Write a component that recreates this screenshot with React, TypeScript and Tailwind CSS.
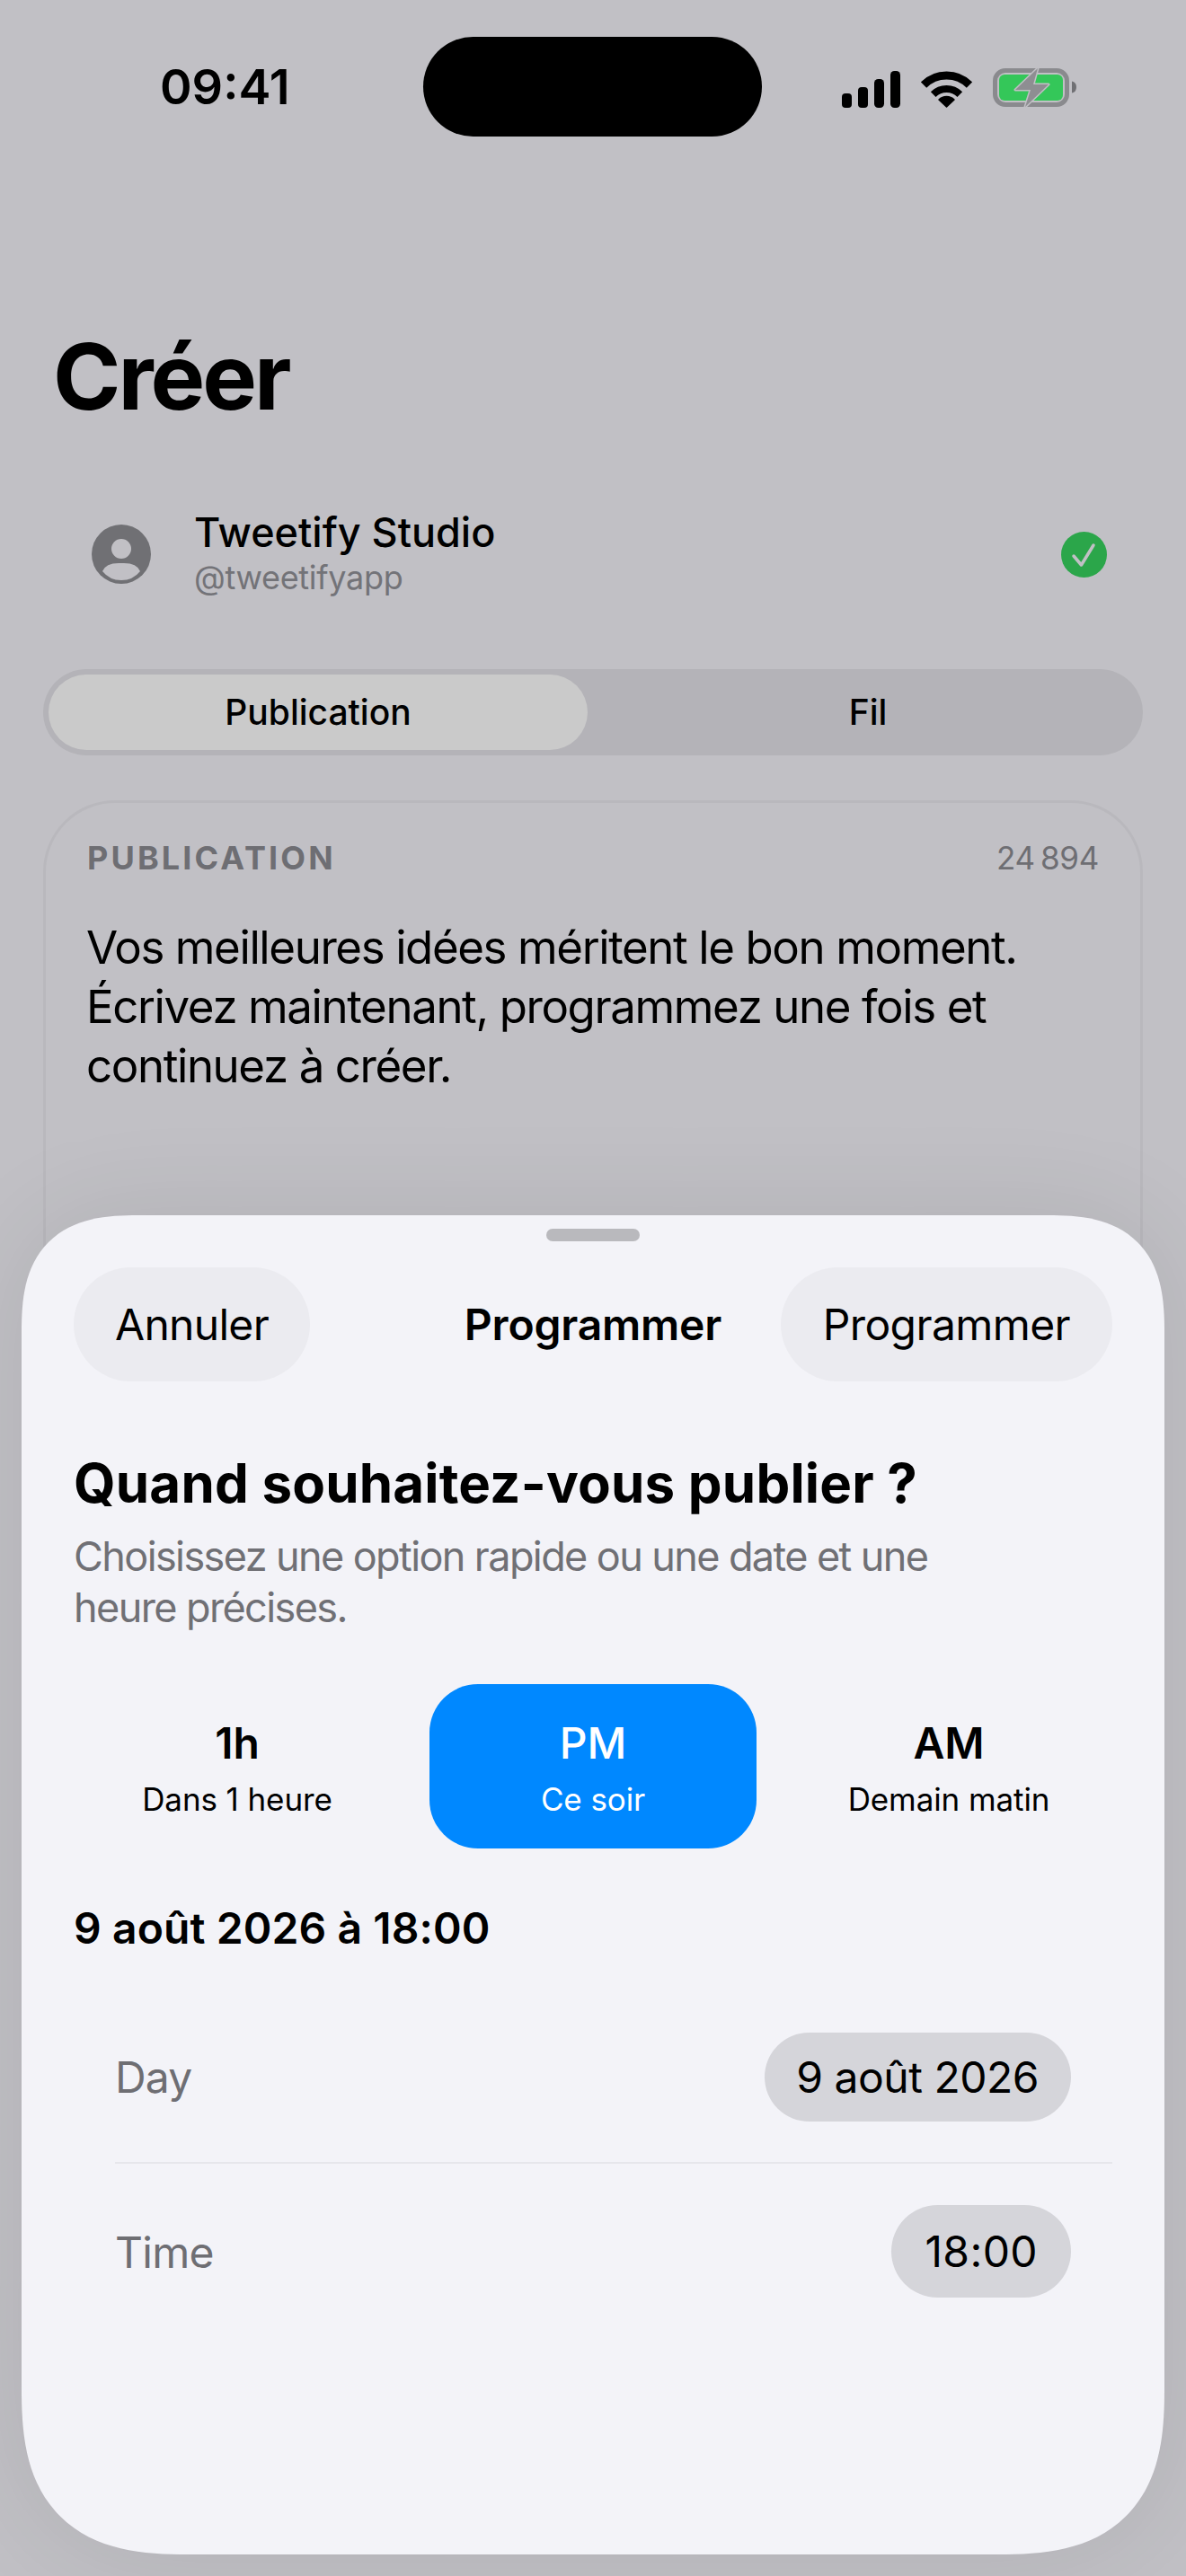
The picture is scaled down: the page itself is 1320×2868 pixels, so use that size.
export default function App() {
  return (
    <div className="relative h-[2868px] w-[1320px] overflow-hidden bg-[#c1c0c5] font-['Inter','Noto_Sans',sans-serif] text-black">
      <header className="flex h-[152px] items-start pt-[41px]">
        <div className="w-[471px] pl-[178px] pt-[26px] text-[54px] leading-[60px] font-semibold">09:41</div>
        <div className="h-[111px] w-[377px] rounded-full bg-black" />
        <div className="flex items-end pl-[89px] pt-[34px]">
          <svg width="65" height="41" viewBox="0 0 65 41" fill="#000">
            <rect x="0" y="25" width="11" height="16" rx="4" />
            <rect x="18" y="18" width="11" height="23" rx="4" />
            <rect x="36" y="9" width="11" height="32" rx="4.5" />
            <rect x="54" y="0" width="11" height="41" rx="4.5" />
          </svg>
          <svg className="ml-[23px]" width="57" height="42" viewBox="0 0 57 42">
            <path d="M3 16.5A36 36 0 0 1 54 16.5" fill="none" stroke="#000" strokeWidth="9" />
            <path d="M13.7 27.2A21 21 0 0 1 43.3 27.2" fill="none" stroke="#000" strokeWidth="8" />
            <path d="M28.5 41L20 33A12 12 0 0 1 37 33Z" fill="#000" stroke="#000" strokeWidth="1.5" strokeLinejoin="round" />
          </svg>
          <svg className="ml-[23px]" width="93" height="45" viewBox="0 -1 93 45">
            <rect x="2.5" y="2.5" width="80" height="38" rx="11.5" fill="none" stroke="#8a8a8e" strokeWidth="5" />
            <rect x="7" y="7" width="71" height="29" rx="6" fill="#34c759" />
            <path d="M88 14.5Q93 15.5 93 21T88 27.5Z" fill="#707074" />
            <path d="M50 0L25 24H42L36 43L62 18H45Z" fill="#8e8e92" stroke="#c1c0c5" strokeWidth="3" strokeLinejoin="round" paintOrder="stroke" />
          </svg>
        </div>
      </header>

      <main className="px-[48px]">
        <h1 className="ml-[11px] mt-[207px] text-[102px] leading-[120px] font-bold tracking-[-3px]">Créer</h1>

        <section className="mt-[74px] flex h-[128px] items-center pl-[54px] pr-[40px]">
          <svg width="66" height="66" viewBox="0 0 66 66">
            <circle cx="33" cy="33" r="33" fill="#707074" />
            <circle cx="33" cy="27" r="11" fill="#c1c0c5" />
            <path d="M12 52Q16 42 33 43Q50 42 54 52Q46 62 33 62Q20 62 12 52Z" fill="#c1c0c5" />
          </svg>
          <div className="ml-[48px] flex-1 pb-[4px]">
            <div className="mb-[2px] text-[45px] leading-[54px] font-medium">Tweetify Studio</div>
            <div className="text-[36px] leading-[42px] tracking-[-0.3px] text-[#737378]">@tweetifyapp</div>
          </div>
          <svg width="51" height="51" viewBox="0 0 51 51">
            <circle cx="25.5" cy="25.5" r="25.5" fill="#2ba64a" />
            <path d="M14 27L22.5 37L36 15" fill="none" stroke="#c1c0c5" strokeWidth="3.5" strokeLinecap="round" strokeLinejoin="round" />
          </svg>
        </section>

        <nav className="mt-[64px] flex h-[96px] rounded-full bg-[#b4b3b8] p-[6px]">
          <div className="flex w-[600px] items-center justify-center rounded-full bg-[#cacaca] text-[39px] font-medium">Publication</div>
          <div className="flex flex-1 items-center justify-center pl-[12px] text-[39px] font-medium">Fil</div>
        </nav>

        <section className="mt-[50px] h-[800px] rounded-[80px] border-[3px] border-[#b9b8bd] px-[46px] pt-[39px]">
          <div className="flex items-center justify-between">
            <span className="text-[36px] leading-[44px] font-bold tracking-[3.1px] text-[#6e6e73]">PUBLICATION</span>
            <span className="text-[35px] leading-[44px] tracking-[-0.3px] text-[#6e6e73]">24{"\u2009"}894</span>
          </div>
          <p className="-ml-[1px] mt-[45px] text-[51px] leading-[66px] tracking-[-1.4px]">
            Vos meilleures idées méritent le bon moment.
            <br />
            Écrivez maintenant, programmez une fois et
            <br />
            continuez à créer.
          </p>
        </section>
      </main>

      <aside className="absolute left-[24px] top-[1353px] h-[1491px] w-[1272px] rounded-t-[130px] rounded-b-[185px] bg-[#f3f3f8] px-[58px] pt-[15px] shadow-[0_0_120px_rgba(0,0,0,0.09)] [corner-shape:superellipse(1.4)]">
        <div className="mx-auto h-[14px] w-[104px] rounded-full bg-[#b9b9bd]" />
        <div className="mt-[29px] grid h-[127px] grid-cols-[1fr_auto_1fr] items-center">
          <div className="flex h-full items-center justify-self-start rounded-full bg-[#ebebf0] px-[46px] text-[48px] tracking-[-0.7px]">Annuler</div>
          <div className="text-[48px] font-semibold tracking-[-0.2px]">Programmer</div>
          <div className="flex h-full items-center justify-self-end rounded-full bg-[#ebebf0] px-[47px] text-[48px] tracking-[-0.6px]">Programmer</div>
        </div>

        <h2 className="mt-[77px] text-[60px] leading-[72px] font-bold tracking-[0.2px]">Quand souhaitez-vous publier ?</h2>
        <p className="mt-[17px] w-[1000px] text-[45px] leading-[57px] tracking-[-1.6px] text-[#707075]">
          Choisissez une option rapide ou une date et une heure précises.
        </p>

        <div className="mt-[57px] grid h-[183px] grid-cols-3 gap-[32px]">
          <div className="flex flex-col items-center justify-center rounded-[54px]">
            <div className="text-[48px] leading-[60px] font-semibold">1h</div>
            <div className="mt-[12px] text-[35px] leading-[40px] tracking-[-0.1px]">Dans 1 heure</div>
          </div>
          <div className="flex flex-col items-center justify-center rounded-[54px] bg-[#0088ff] text-white">
            <div className="text-[48px] leading-[60px] font-medium">PM</div>
            <div className="mt-[12px] text-[35px] leading-[40px] tracking-[-0.1px]">Ce soir</div>
          </div>
          <div className="flex flex-col items-center justify-center rounded-[54px]">
            <div className="text-[48px] leading-[60px] font-semibold">AM</div>
            <div className="mt-[12px] text-[35px] leading-[40px] tracking-[-0.1px]">Demain matin</div>
          </div>
        </div>

        <div className="mt-[59px] text-[48px] leading-[60px] font-semibold tracking-[0.1px]">9 août 2026 à 18:00</div>

        <div className="ml-[46px] mt-[86px]">
          <div className="flex h-[146px] items-start justify-between border-b-[2px] border-[#e6e6eb]">
            <span className="mt-[20px] text-[48px] leading-[60px] tracking-[-0.8px] text-[#6e6e73]">Day</span>
            <span className="mr-[46px] flex h-[99px] items-center rounded-full bg-[#d5d5da] pl-[35px] pr-[36px] text-[48px] tracking-[-0.5px]">9 août 2026</span>
          </div>
          <div className="flex items-start justify-between pt-[46px]">
            <span className="mt-[23px] text-[48px] leading-[60px] tracking-[-0.7px] text-[#6e6e73]">Time</span>
            <span className="mr-[46px] flex h-[103px] items-center rounded-full bg-[#d5d5da] px-[37px] text-[48px] tracking-[0.4px]">18:00</span>
          </div>
        </div>
      </aside>
    </div>
  );
}
